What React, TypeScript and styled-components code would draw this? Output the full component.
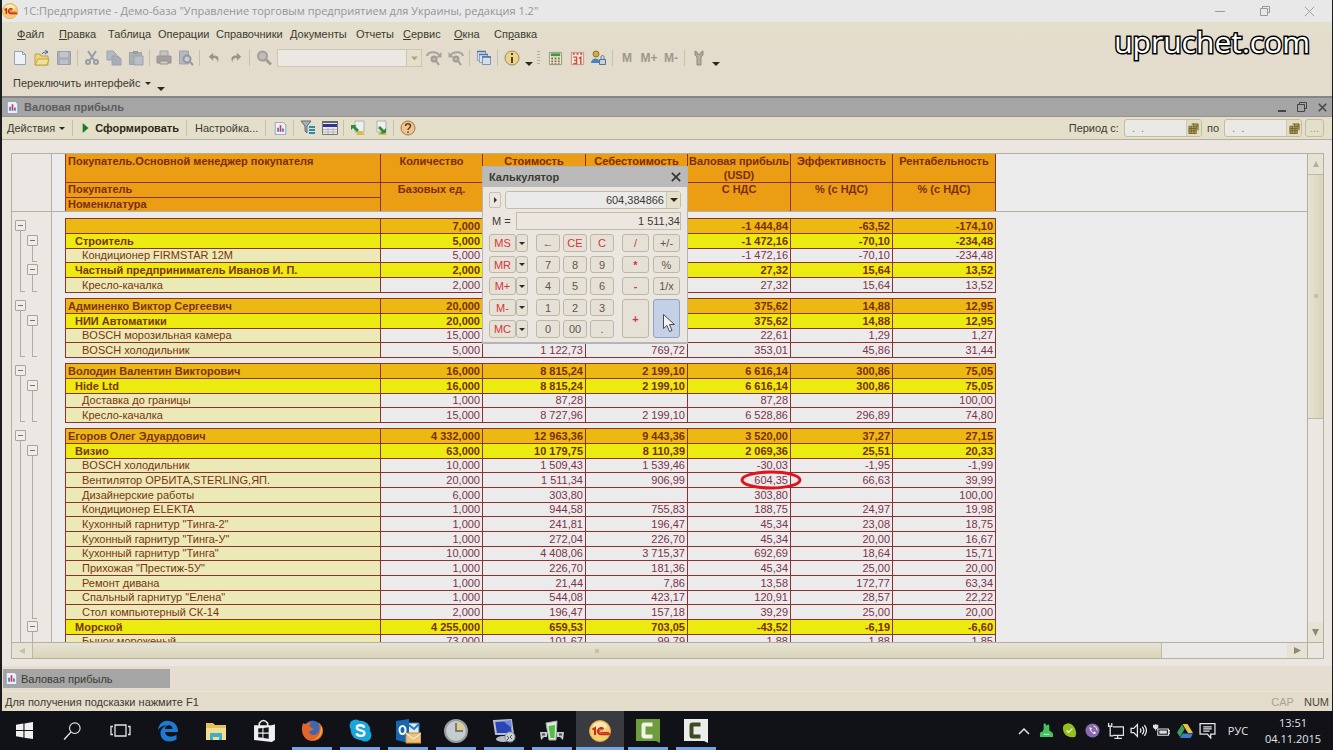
import React from 'react';
import styled, { createGlobalStyle, css } from 'styled-components';

const UI = '"Liberation Sans", Arial, sans-serif';
const SEGOE = '"Open Sans", "Noto Sans", sans-serif';
const LINE = '#8f3030';
const FRAME = '#b4b0a2';

const GlobalStyle = createGlobalStyle`
  * { box-sizing: border-box; }
  body { margin: 0; background: #1c1c1c; font-family: ${UI}; font-size: 11px; color: #3d3a30; }
  button, input { font: inherit; color: inherit; margin: 0; padding: 0; border: 0; background: none; }
  svg { display: block; flex: none; }
`;

const Desktop = styled.div`
  height: 100vh;
  display: flex;
  flex-direction: column;
  overflow: hidden;
  position: relative;
`;
const Window = styled.div`
  flex: 1;
  min-height: 0;
  margin: 0 1px 0 2px;
  display: flex;
  flex-direction: column;
  background: #e3dccc;
`;
const TitleBar = styled.header`
  height: 22px;
  display: flex;
  align-items: center;
  background: #e8e8e9;
  padding: 0 15px 0 0;
  font: 11px/20px ${SEGOE};
  color: #959595;
`;
const TitleText = styled.h1`
  margin: 0 auto 0 5px;
  font: inherit;
  white-space: nowrap;
`;
const WindowButtons = styled.div`
  display: flex;
  gap: 30px;
  button { display: grid; place-items: center; width: 15px; height: 20px; color: #999; }
`;
const Watermark = styled.div`
  position: absolute;
  top: 24px;
  right: 23px;
  font: 30px/36px ${SEGOE};
  color: #fff;
  -webkit-text-stroke: 3px #000;
  paint-order: stroke fill;
`;
const MenuBar = styled.nav`
  height: 24px;
  display: flex;
  align-items: center;
  padding-left: 15px;
  background: linear-gradient(#e2e0cc, #e4dccb);
`;
const MenuItem = styled.button<{ $w: number }>`
  width: ${p => p.$w}px;
  text-align: left;
  white-space: nowrap;
`;
const Toolbar = styled.div<{ $h: number; $pad: number }>`
  height: ${p => p.$h}px;
  padding-left: ${p => p.$pad}px;
  display: flex;
  align-items: center;
  flex: none;
`;
const Tool = styled.button<{ $narrow?: boolean }>`
  && {
    width: ${p => (p.$narrow ? 11 : 22)}px;
    height: 20px;
    display: grid;
    place-items: center;
    color: #9d988e;
    font-size: 12px;
    font-weight: bold;
  }
`;
const Separator = styled.span`
  width: 1px;
  height: 16px;
  margin: 0 3px 0 2px;
  background: #c5bfae;
  flex: none;
`;
const Grip = styled.span`
  width: 3px;
  height: 14px;
  margin: 0 4px 0 3px;
  background: repeating-linear-gradient(#b4ae9f 0 1px, transparent 1px 3px);
`;
const Search = styled.div`
  width: 145px;
  height: 18px;
  margin: 0 1px 0 2px;
  display: flex;
  border: 1px solid #cbc5b2;
  background: #ebe8e4;
  input { flex: 1; min-width: 0; }
  button { width: 15px; border-left: 1px solid #cbc5b2; background: #e4dfc9; display: grid; place-items: center; }
`;
const TextButton = styled.button<{ $bold?: boolean }>`
  display: flex;
  align-items: center;
  gap: 4px;
  height: 20px;
  padding: 0 5px;
  white-space: nowrap;
  && { font-weight: ${p => (p.$bold ? 'bold' : 'normal')}; }
  color: ${p => (p.$bold ? '#2d2818' : '#3d3a30')};
`;
const Caret = styled.i<{ $big?: boolean }>`
  border: ${p => (p.$big ? 4 : 3)}px solid transparent;
  border-top-color: #2b2820;
  border-bottom: 0;
`;
const Overflow = styled(Caret)`
  margin-top: 12px;
`;
const DocTitle = styled.div`
  height: 21px;
  display: flex;
  align-items: center;
  padding: 0 3px 0 4px;
  background: #a5a5a5;
  border-top: 2px solid #858585;
  border-bottom: 1px solid #96948c;
  color: #5c5c5c;
  h2 { margin: 0 auto 0 5px; font-size: 11px; line-height: 16px; }
`;
const DocButtons = styled.div`
  display: flex;
  gap: 6px;
  button { width: 14px; height: 16px; display: grid; place-items: center; color: #444; }
`;
const DocBar = styled.div`
  height: 23px;
  flex: none;
  display: flex;
  align-items: center;
  background: #e3dfcb;
  border-bottom: 1px solid #b5ae9a;
`;
const Period = styled.div`
  margin-left: auto;
  display: flex;
  align-items: center;
  padding-right: 8px;
  white-space: nowrap;
`;
const DateField = styled.div`
  width: 78px;
  height: 18px;
  display: flex;
  border: 1px solid #c3bca4;
  border-radius: 3px;
  background: #ebe9e6;
  overflow: hidden;
  input { flex: 1; min-width: 0; padding-left: 7px; color: #777; white-space: pre; }
  button { width: 15px; background: #e2dcc3; border-left: 1px solid #cfc9b4; display: grid; place-items: center; }
`;
const MoreButton = styled.button`
  && {
    width: 19px;
    height: 18px;
    margin-left: 3px;
    border: 1px solid #c3bca4;
    border-radius: 3px;
    color: #a09a88;
  }
`;
const Content = styled.main`
  flex: 1;
  min-height: 0;
  display: flex;
  padding: 13px 8px 7px 9px;
  background: #ebe6e0;
`;
const Viewer = styled.section`
  flex: 1;
  min-width: 0;
  display: grid;
  grid-template-columns: minmax(0, 1fr) 16px;
  grid-template-rows: minmax(0, 1fr) 16px;
  border: 1px solid ${FRAME};
`;
const SheetArea = styled.div`
  overflow: hidden;
  background: #ebebec;
`;
const Sheet = styled.table`
  width: 100%;
  table-layout: fixed;
  border-collapse: separate;
  border-spacing: 0;
  font-size: 11px;
  line-height: 13px;
  td, th { padding: 0; white-space: nowrap; }
`;
const HeadCell = styled.th<{ $left?: boolean; $first?: boolean }>`
  && {
    background: #eb9d14;
    color: #7c2c0c;
    vertical-align: top;
    white-space: normal;
    line-height: ${p => (p.$first ? 14 : 13)}px;
    text-align: ${p => (p.$left ? 'left' : 'center')};
    padding-left: ${p => (p.$left ? 2 : 0)}px;
    border-right: 1px solid ${LINE};
    border-left: ${p => (p.$left ? `1px solid ${LINE}` : 0)};
    border-top: ${p => (p.$first ? 0 : `1px solid ${LINE}`)};
  }
`;
const Gutter = styled.td<{ $edge?: boolean; $top?: boolean }>`
  background-color: #ebe7e2;
  border-right: ${p => (p.$edge ? `1px solid ${FRAME}` : 0)};
  border-top: ${p => (p.$top ? `1px solid ${FRAME}` : 0)};
`;
const Rule = styled.td`
  border-top: 1px solid ${FRAME};
`;
const HeadRow = styled.tr<{ $h: number }>`
  height: ${p => p.$h}px;
`;
const Group = styled.tbody`
  tr { height: 15px; }
  tr:nth-child(3n) { height: 14px; }
  tr:last-child { height: 6px; line-height: 5px; }
`;
type Mark = 'toggle' | 'line' | 'end' | 'none';
const TreeCell = styled(Gutter)<{ $mark: Mark; $x: number }>`
  vertical-align: top;
  background-repeat: no-repeat;
  ${p => {
    const c = 'linear-gradient(#b0aca4, #b0aca4)';
    if (p.$mark === 'toggle')
      return css`background-image: ${c}; background-size: 1px 100%; background-position: ${p.$x}px 12px;`;
    if (p.$mark === 'line')
      return css`background-image: ${c}; background-size: 1px 100%; background-position: ${p.$x}px 0;`;
    if (p.$mark === 'end')
      return css`background-image: ${c}, ${c}; background-size: 1px 100%, 5px 1px; background-position: ${p.$x}px 0, ${p.$x}px 100%;`;
    return '';
  }}
`;
const Toggle = styled.button<{ $x: number }>`
  && {
    display: block;
    width: 11px;
    height: 11px;
    margin: 2px 0 0 ${p => p.$x - 5}px;
    border: 1px solid #a9a59c;
    border-radius: 1px;
    background: linear-gradient(#77736b, #77736b) center / 5px 1px no-repeat #efede8;
  }
`;
type Kind = 'manager' | 'client' | 'item';
const fill = { manager: '#ebb911', client: '#ebeb0f', item: 'transparent' };
const indent = { manager: 2, client: 9, item: 16 };
const NameCell = styled.th<{ $kind: Kind }>`
  && {
    padding-left: ${p => indent[p.$kind]}px;
    text-align: left;
    font-weight: ${p => (p.$kind === 'item' ? 'normal' : 'bold')};
    background: ${p => (p.$kind === 'item' ? '#ebeab6' : fill[p.$kind])};
    color: #7d3312;
    border: 1px solid ${LINE};
    border-bottom: 0;
  }
`;
const NumCell = styled.td<{ $kind: Kind }>`
  && {
    position: relative;
    padding-right: 2px;
    text-align: right;
    font-weight: ${p => (p.$kind === 'item' ? 'normal' : 'bold')};
    background: ${p => fill[p.$kind]};
    color: ${p => (p.$kind === 'item' ? '#7c3348' : '#7c2c0c')};
    border-right: 1px solid ${LINE};
    border-top: 1px solid ${LINE};
  }
`;
const GroupEnd = styled.td`
  border-top: 1px solid ${LINE};
`;
const Highlight = styled.svg`
  position: absolute;
  z-index: 1;
  right: -12px;
  top: -3px;
`;
const ScrollV = styled.div`
  display: flex;
  flex-direction: column;
  border-left: 1px solid ${FRAME};
  background: #ebe7e2;
`;
const ScrollH = styled.div`
  display: flex;
  border-top: 1px solid ${FRAME};
  background: #ebe9e8;
`;
const ScrollArrow = styled.button`
  flex: 0 0 20px;
  && {
    display: grid;
    place-items: center;
    background: #e6e2d4;
  }
`;
const Thumb = styled.div<{ $grow: number; $vertical?: boolean }>`
  flex: ${p => p.$grow} 0 0;
  display: grid;
  place-items: center;
  background: linear-gradient(${p => (p.$vertical ? '90deg' : '180deg')}, #e6e3d5, #dad4b8);
  border: solid #beb9a4;
  border-width: ${p => (p.$vertical ? '1px 0' : '0 1px')};
  &::after { content: ''; width: 4px; height: 4px; background: #c4bfaa; border-radius: 1px; }
`;
const Track = styled.div<{ $grow: number }>`
  flex: ${p => p.$grow} 0 0;
`;
const Corner = styled.div`
  border: solid ${FRAME};
  border-width: 1px 0 0 1px;
`;
const TabStrip = styled.div`
  height: 25px;
  padding: 3px 0 3px 1px;
  background: #e4ddd0;
`;
const Tab = styled.button`
  && {
    display: flex;
    align-items: center;
    gap: 3px;
    width: 167px;
    height: 19px;
    padding-left: 2px;
    background: #a5a5a5;
  }
`;
const StatusBar = styled.footer`
  height: 20px;
  display: flex;
  align-items: center;
  padding: 0 3px;
  background: #e3dccb;
  border-top: 1px solid #e9e3d2;
  p { margin: 0 auto 0 0; }
`;
const Lock = styled.span<{ $off?: boolean }>`
  color: ${p => (p.$off ? '#aaa392' : '#4b473b')};
  margin-left: 10px;
`;

/* calculator */
const Calc = styled.section`
  position: absolute;
  left: 482px;
  top: 166px;
  width: 206px;
  height: 178px;
  z-index: 2;
  padding: 2px 6px 0 6px;
  border: 1px solid #b5b5b5;
  border-bottom: 2px solid #b5b5b5;
  background: #ebe7e0;
`;
const CalcTitle = styled.div`
  display: flex;
  align-items: center;
  justify-content: space-between;
  height: 20px;
  margin: -2px -6px 4px;
  padding: 0 6px;
  background: #bababb;
  h3 { margin: 0; font-size: 11px; }
  button { color: #333; }
`;
const CalcLine = styled.div`
  display: flex;
  align-items: center;
  height: 18px;
  margin-bottom: 3px;
  label { width: 27px; padding-left: 3px; flex: none; white-space: nowrap; }
  input { flex: 1; min-width: 0; text-align: right; }
`;
const StepButton = styled.button`
  && {
    width: 12px;
    height: 16px;
    margin-right: 4px;
    border: 1px solid #c6c0ad;
    border-radius: 2px;
    display: grid;
    place-items: center;
  }
`;
const Display = styled.div`
  flex: 1;
  height: 18px;
  display: flex;
  border: 1px solid #c3bda8;
  border-radius: 3px;
  background: #ebeaea;
  button { width: 14px; margin-left: 2px; border-left: 1px solid #cfc9b4; display: grid; place-items: center; background: #e6e0c8; }
`;
const Memory = styled.input`
  && { height: 18px; border: 1px solid #c3bda8; }
`;
const Keys = styled.div`
  display: grid;
  grid-template-columns: 27px 12px 8px 24px 3px 24px 3px 24px 8px 27px 4px 27px;
  grid-template-rows: 18px 17px 18px 17px 18px;
  row-gap: 4px;
  margin-top: 4px;
`;
const Key = styled.button<{ $col: number; $row: number; $span?: number; $red?: boolean; $bold?: boolean; $active?: boolean }>`
  && {
    grid-column: ${p => p.$col};
    grid-row: ${p => p.$row} / span ${p => p.$span ?? 1};
    display: grid;
    place-items: center;
    position: relative;
    border: 1px solid ${p => (p.$active ? '#8ea3c6' : '#bdb7a4')};
    border-radius: 3px;
    background: ${p => (p.$active ? '#c3d0e6' : '#e6e1d6')};
    color: ${p => (p.$red ? '#d8343a' : '#5c584c')};
    font-weight: ${p => (p.$bold ? 'bold' : 'normal')};
  }
`;
const Pointer = styled.svg`
  position: absolute;
  left: 8px;
  top: 13px;
`;

/* taskbar */
const Taskbar = styled.nav`
  height: 39px;
  flex: none;
  display: flex;
  align-items: center;
  background: #101218;
  color: #e4e4e4;
`;
const TaskButton = styled.button<{ $open?: boolean; $active?: boolean }>`
  && {
    width: 48px;
    height: 39px;
    display: grid;
    place-items: center;
    position: relative;
    background: ${p => (p.$active ? '#3a3b40' : 'none')};
    &::after {
      content: '';
      position: absolute;
      bottom: 0;
      left: ${p => (p.$active ? 0 : 4)}px;
      right: ${p => (p.$active ? 0 : 4)}px;
      height: 3px;
      background: ${p => (p.$open ? '#76a5e3' : 'transparent')};
    }
  }
`;
const Tray = styled.div`
  margin-left: auto;
  display: flex;
  align-items: center;
  font: 11px/16px ${SEGOE};
`;
const TrayButton = styled.button`
  width: 23px;
  height: 39px;
  display: grid;
  place-items: center;
`;
const Language = styled.button`
  width: 38px;
  text-align: center;
`;
const Clock = styled.time`
  width: 72px;
  margin-right: 4px;
  text-align: center;
`;

type P = { children: React.ReactNode; s?: number; box?: string };
const Ico = ({ children, s = 16, box = '0 0 16 16' }: P) => (
  <svg width={s} height={s} viewBox={box} fill="none" stroke="currentColor" aria-hidden="true">{children}</svg>
);
const OneC = ({ s = 16 }: { s?: number }) => (
  <Ico s={s} box="0 0 22 22">
    <circle cx="11" cy="11" r="10.5" fill="#f3cf70" stroke="#e2a94a" />
    <ellipse cx="11" cy="6" rx="7" ry="4" fill="#fae9b4" stroke="none" />
    <path d="M3.5 9.5 6 8v7M14.5 9a3.2 3.2 0 1 0-2 5.3H21" stroke="#cc2a1c" strokeWidth="2" />
    <path d="M13.5 10.500a1.500 1.500 0 1 0-1 2H20" stroke="#cc2a1c" strokeWidth="1" />
  </Ico>
);
const Report = () => (
  <Ico s={13}>
    <path d="M1.500.5h10l3 3v12h-13z" fill="#eceff5" stroke="#8596ad" />
    <path d="M5 12V7" stroke="#3a70c0" strokeWidth="2" /><path d="M8 12V4" stroke="#d33" strokeWidth="2" /><path d="M11 12V8" stroke="#3a70c0" strokeWidth="2" />
  </Ico>
);
const Restore = () => (
  <Ico s={12} box="0 0 12 12"><path d="M3.500 3V1.500h7v6H9M1.500 3.500h7v7h-7z" /></Ico>
);
const Cross = ({ s = 11, w = 1 }: { s?: number; w?: number }) => (
  <Ico s={s} box="0 0 12 12"><path d="m1 1 10 10M11 1 1 11" strokeWidth={w} /></Ico>
);
const GridIcon = () => (
  <Ico s={11} box="0 0 12 12">
    <path d="M4 1h7v7M1 3.500h8v8H1z" fill="#b6a75c" stroke="#6d612c" /><path d="M1 6h8M1 8.500h8M3.500 3.500v8M6.500 3.500v8M6 1v2M9 3h2" stroke="#6d612c" />
  </Ico>
);
const Lens = () => <><circle cx="6.500" cy="6" r="4.500" fill="#c0bdb8" stroke="#a19d98" strokeWidth="2" /><path d="m10 9.500 5 5" stroke="#a19d98" strokeWidth="3" /></>;

const edit: Record<string, React.ReactNode> = {
  Создать: <Ico><path d="M2.500 1.500h8l3 3v10h-11z" fill="#edf0f5" stroke="#8fa3bb" /><path d="M10.500 1.500v3h3" stroke="#8fa3bb" /></Ico>,
  Открыть: <Ico><path d="M1 4h5l1 2h7v9H1z" fill="#ead57c" stroke="#bfa245" /><path d="m1 15 3-6h11l-2 6z" fill="#f0df95" stroke="#bfa245" /><path d="M8 4c1-2 3-2 5-2m-2-2 3 2-3 2" stroke="#3c67a8" /></Ico>,
  Сохранить: <Ico><path d="M1.500 1.500h13v13h-13z" fill="#a9afb8" stroke="#98a0ad" /><path d="M4 2h8v5H4z" fill="#c3c7cc" stroke="none" /><path d="M4 10h8v4H4z" fill="#bcc0c8" stroke="none" /></Ico>,
  Вырезать: <Ico><path d="m4 1 6 9M12 1 6 10" stroke="#979da6" strokeWidth="2" /><circle cx="4" cy="12" r="2" stroke="#979da6" strokeWidth="2" /><circle cx="12" cy="12" r="2" stroke="#979da6" strokeWidth="2" /></Ico>,
  Копировать: <Ico><path d="M1 1h6l3 3v6H1z" fill="#b4bac2" stroke="#9aa2ae" /><path d="M6 6h6l3 3v6H6z" fill="#a7adb6" stroke="#9aa2ae" /></Ico>,
  Вставить: <Ico><path d="M1.500 2.500h12v12h-12z" fill="#aeb0b0" stroke="#a0a3a7" /><path d="M5 1h5v3H5z" fill="#989ca3" stroke="none" /><path d="M6 6h9v9H6z" fill="#b9bec5" stroke="#9aa2ae" /></Ico>,
  Печать: <Ico><path d="M4 6V1h8v5" fill="#c4c3c2" stroke="#a4a09d" /><path d="M1 6h14v7H1z" fill="#a5a09e" stroke="#979390" /><path d="M4 11h8v3H4z" fill="#cfccca" stroke="#979390" /></Ico>,
  Просмотр: <Ico><path d="M1.500 1h9v13h-9z" fill="#b5bac1" stroke="#9da4ad" /><circle cx="9" cy="9" r="3.500" fill="#c8cbd0" stroke="#9097a1" strokeWidth="2" /><path d="m12 12 3 3" stroke="#9097a1" strokeWidth="2" /></Ico>,
  Отменить: <Ico s={14}><path d="M7 2 2 6.500 7 11V8c4 0 5 2 5 5 3-6 0-8-5-8z" fill="#99958d" stroke="none" /></Ico>,
  Вернуть: <Ico s={14}><path d="m9 2 5 4.500L9 11V8c-4 0-5 2-5 5-3-6 0-8 5-8z" fill="#99958d" stroke="none" /></Ico>,
  Найти: <Ico><Lens /></Ico>,
};
const FindNext = ({ flip }: { flip?: boolean }) => (
  <Ico><g transform={flip ? 'matrix(-1 0 0 1 16 0)' : undefined}><path d="M1 6c1-5 10-5 13 0" stroke="#a7a39a" strokeWidth="2" /><path d="M15.500 2v5.500H10z" fill="#a7a39a" stroke="none" /></g><circle cx="8" cy="9" r="2.500" fill="#bdb9b0" stroke="#a09c93" strokeWidth="2" /><path d="m10 11 3 4" stroke="#a09c93" strokeWidth="2" /></Ico>
);
const Windows_ = () => <Ico><path d="M1.500 1.500h8v9h-8z" fill="#dbe2ec" stroke="#8da2c2" /><path d="M3.500 4.500h8v8h-8z" fill="#dbe2ec" stroke="#8da2c2" /><path d="M6.500 6.500h8v8h-8z" fill="#d5deea" stroke="#7b93b8" /><path d="M1 1.500h9M3 4.500h9M6 7h9" stroke="#4d72ad" strokeWidth="1.500" /></Ico>;
const Info = () => <Ico><circle cx="8" cy="8" r="7" fill="#ebd48a" stroke="#9c8b5b" /><path d="M8 7v6M8 3v2" stroke="#4e4526" strokeWidth="2" /></Ico>;
const CalcIcon = () => <Ico s={15}><path d="M1.500 1.500h13v13h-13z" fill="#ebe6cf" stroke="#9a9270" /><path d="M3 4h10" stroke="#3a9a48" strokeWidth="3" /><path d="M4.500 7v7M8 7v7M11.500 7v7" stroke="#7c744f" strokeWidth="2" strokeDasharray="2 1" /></Ico>;
const Calendar = () => <Ico s={15}><path d="M1.500 1.500h13v13h-13z" fill="#f1e5dc" stroke="#c79080" /><path d="M3 3h10" stroke="#d24a32" strokeWidth="2" strokeDasharray="2 2" /><path d="M3.500 6.500H7v3.500H4.500 7v3.500H3.500M9.500 8l2-1.500V14" stroke="#d24a32" strokeWidth="1.500" /></Ico>;
const Users = () => <Ico><circle cx="5" cy="4" r="3" fill="#d2ac3c" stroke="#8d742c" /><path d="M0 13c0-6 9-6 9 0z" fill="#4c83bd" stroke="none" /><path d="M8.500 9.500h6v5h-6z" fill="#c9d1de" stroke="#54719c" /><path d="M10 9V7c0-2 3-2 3 0v2" stroke="#54719c" /></Ico>;
const Wrench = () => <Ico><path d="M4 1v4l2 2v8h4V7l2-2V1l-2 1v2H6V2z" fill="#b1ada2" stroke="#8f8a7e" /></Ico>;
const Filter = () => <Ico><path d="M1 1h10L7 6v7L5 11V6z" fill="#a9b0ba" stroke="#667" /><path d="M9 7h6M9 10h6M9 13h6" stroke="#2d8bb0" strokeWidth="2" /></Ico>;
const TableIcon = () => <Ico><path d="M.5 1.500h15v13H.5z" fill="#e9e9e9" stroke="#77777c" /><path d="M0 2h16" stroke="#66666c" strokeWidth="2" /><path d="M1 5.500h14" stroke="#2c3596" strokeWidth="3" /><path d="M1 9.500h14M1 12h14M6 8v6M11 8v6" stroke="#b5b5b5" /></Ico>;
const SheetArrow = ({ out }: { out?: boolean }) => <Ico><path d="M5 1h9v11H5z" fill="#eef0ee" stroke="#a9b3b8" /><path d="M6 15h9l-3-4H8z" fill="#dbbd4d" stroke="none" />{out ? <path d="M14 13V8l-2 2-4-4-2 2 4 4-2 2z" fill="#2f8b3a" stroke="none" /> : <path d="M1 5v5l2-2 4 4 2-2-4-4 2-1z" fill="#2f8b3a" stroke="none" />}</Ico>;
const Help = () => <Ico><circle cx="8" cy="8" r="7" fill="#ecc592" stroke="#a67442" /><path d="M5.500 6c0-3 5-3 5 0 0 2-2.500 2-2.500 4M8 11.500v1.500" stroke="#6b3a1c" strokeWidth="1.500" /></Ico>;

const menu: [string, number, number][] = [
  ['Файл', 42, 0], ['Правка', 49, 0], ['Таблица', 50, -1], ['Операции', 58, -1], ['Справочники', 74, -1],
  ['Документы', 66, -1], ['Отчеты', 47, -1], ['Сервис', 51, 0], ['Окна', 40, 0], ['Справка', 50, 2],
];

const raw: string[][] = [
  [
    'm||7,000|||-1 444,84|-63,52|-174,10', 'c|Строитель|5,000|||-1 472,16|-70,10|-234,48',
    'i|Кондиционер FIRMSTAR 12М|5,000|||-1 472,16|-70,10|-234,48', 'c|Частный предприниматель Иванов И. П.|2,000|||27,32|15,64|13,52',
    'i|Кресло-качалка|2,000|||27,32|15,64|13,52',
  ],
  [
    'm|Админенко Виктор Сергеевич|20,000|||375,62|14,88|12,95', 'c|НИИ Автоматики|20,000|||375,62|14,88|12,95',
    'i|BOSCH морозильная камера|15,000|||22,61|1,29|1,27', 'i|BOSCH холодильник|5,000|1 122,73|769,72|353,01|45,86|31,44',
  ],
  [
    'm|Володин Валентин Викторович|16,000|8 815,24|2 199,10|6 616,14|300,86|75,05', 'c|Hide Ltd|16,000|8 815,24|2 199,10|6 616,14|300,86|75,05',
    'i|Доставка до границы|1,000|87,28||87,28||100,00', 'i|Кресло-качалка|15,000|8 727,96|2 199,10|6 528,86|296,89|74,80',
  ],
  [
    'm|Егоров Олег Эдуардович|4 332,000|12 963,36|9 443,36|3 520,00|37,27|27,15', 'c|Визио|63,000|10 179,75|8 110,39|2 069,36|25,51|20,33',
    'i|BOSCH холодильник|10,000|1 509,43|1 539,46|-30,03|-1,95|-1,99', 'i|Вентилятор ОРБИТА,STERLING,ЯП.|20,000|1 511,34|906,99|604,35|66,63|39,99',
    'i|Дизайнерские работы|6,000|303,80||303,80||100,00', 'i|Кондиционер ELEKTA|1,000|944,58|755,83|188,75|24,97|19,98',
    'i|Кухонный гарнитур "Тинга-2"|1,000|241,81|196,47|45,34|23,08|18,75', 'i|Кухонный гарнитур "Тинга-У"|1,000|272,04|226,70|45,34|20,00|16,67',
    'i|Кухонный гарнитур "Тинга"|10,000|4 408,06|3 715,37|692,69|18,64|15,71', 'i|Прихожая "Престиж-5У"|1,000|226,70|181,36|45,34|25,00|20,00',
    'i|Ремонт дивана|1,000|21,44|7,86|13,58|172,77|63,34', 'i|Спальный гарнитур "Елена"|1,000|544,08|423,17|120,91|28,57|22,22',
    'i|Стол компьютерный СК-14|2,000|196,47|157,18|39,29|25,00|20,00', 'c|Морской|4 255,000|659,53|703,05|-43,52|-6,19|-6,60',
    'i|Бычок мороженый|73,000|101,67|99,79|1,88|1,88|1,85',
  ],
];
const kinds: Record<string, Kind> = { m: 'manager', c: 'client', i: 'item' };
const groups = raw.map(g => g.map(r => { const [k, name, ...nums] = r.split('|'); return { kind: kinds[k], name, nums }; }));
const columns = [14, 26, 13, 316, 102, 103, 102, 103, 102, 103];

function SheetTable() {
  return (
    <Sheet>
      <colgroup>{columns.map((w, i) => <col key={i} style={{ width: w }} />)}<col /></colgroup>
      <thead>
        <HeadRow $h={28}>
          <Gutter rowSpan={3} /><Gutter rowSpan={3} $edge /><td rowSpan={3} />
          <HeadCell $left $first>Покупатель.Основной менеджер покупателя</HeadCell>
          {['Количество', 'Стоимость', 'Себестоимость', 'Валовая прибыль (USD)', 'Эффективность', 'Рентабельность'].map(t => <HeadCell key={t} $first>{t}</HeadCell>)}
          <td rowSpan={3} />
        </HeadRow>
        <HeadRow $h={15}>
          <HeadCell $left>Покупатель</HeadCell>
          {['Базовых ед.', '', '', 'С НДС', '% (с НДС)', '% (с НДС)'].map((t, i) => <HeadCell key={i} rowSpan={2}>{t}</HeadCell>)}
        </HeadRow>
        <HeadRow $h={14}><HeadCell $left>Номенклатура</HeadCell></HeadRow>
        <HeadRow $h={7}><Gutter $top /><Gutter $top $edge /><Rule colSpan={9} /></HeadRow>
      </thead>
      {groups.map((g, gi) => (
        <Group key={gi}>
          {g.map((r, i) => {
            const last = i === g.length - 1;
            const l1: Mark = i === 0 ? 'toggle' : last ? 'end' : 'line';
            const l2: Mark = r.kind === 'manager' ? 'none' : r.kind === 'client' ? 'toggle' : last || g[i + 1].kind !== 'item' ? 'end' : 'line';
            return (
              <tr key={i}>
                <TreeCell $mark={l1} $x={8}>{l1 === 'toggle' && <Toggle $x={8} aria-label="Свернуть" />}</TreeCell>
                <TreeCell $mark={l2} $x={6} $edge>{l2 === 'toggle' && <Toggle $x={6} aria-label="Свернуть" />}</TreeCell>
                <td />
                <NameCell $kind={r.kind} scope="row">{r.name}</NameCell>
                {r.nums.map((n, j) => (
                  <NumCell key={j} $kind={r.kind}>
                    {n}
                    {n === '604,35' && <Highlight width="62" height="20" fill="none"><ellipse cx="31" cy="10" rx="29" ry="8" stroke="#e0141c" strokeWidth="3" /></Highlight>}
                  </NumCell>
                ))}
                <td />
              </tr>
            );
          })}
          <tr><Gutter /><Gutter $edge /><td /><GroupEnd colSpan={7} /><td /></tr>
        </Group>
      ))}
    </Sheet>
  );
}

function Calculator() {
  const mem = ['MS', 'MR', 'M+', 'M-', 'MC'];
  const digits = [['←', 'CE', 'C'], ['7', '8', '9'], ['4', '5', '6'], ['1', '2', '3'], ['0', '00', '.']];
  return (
    <Calc>
      <CalcTitle><h3>Калькулятор</h3><button aria-label="Закрыть"><Cross s={10} w={2} /></button></CalcTitle>
      <CalcLine>
        <StepButton aria-label="Развернуть"><Ico s={6} box="0 0 6 6"><path d="m2 0 3 3-3 3z" fill="#333" stroke="none" /></Ico></StepButton>
        <Display><input aria-label="Результат" defaultValue="604,384866" /><button aria-label="История"><Caret $big /></button></Display>
      </CalcLine>
      <CalcLine><label htmlFor="mem">M =</label><Memory id="mem" defaultValue="1 511,34" /></CalcLine>
      <Keys>
        {mem.map((m, i) => (
          <React.Fragment key={m}>
            <Key $col={1} $row={i + 1} $red>{m}</Key>
            <Key $col={2} $row={i + 1} aria-label={`${m} список`}><Caret /></Key>
          </React.Fragment>
        ))}
        {digits.map((row, i) => row.map((d, j) => <Key key={d} $col={4 + j * 2} $row={i + 1} $red={i === 0 && j > 0}>{d}</Key>))}
        <Key $col={10} $row={1} $red>/</Key>
        <Key $col={10} $row={2} $red $bold>*</Key>
        <Key $col={10} $row={3} $red $bold>-</Key>
        <Key $col={10} $row={4} $span={2} $red $bold>+</Key>
        <Key $col={12} $row={1}>+/-</Key><Key $col={12} $row={2}>%</Key><Key $col={12} $row={3}>1/x</Key>
        <Key $col={12} $row={4} $span={2} $active aria-label="Равно">
          <Pointer width="14" height="20" viewBox="0 0 14 20"><path d="M1.500 1.500v14l3.500-3 2.500 6 2.500-1-2.500-6h5z" fill="#f4f4f4" stroke="#4a4a55" /></Pointer>
        </Key>
      </Keys>
    </Calc>
  );
}

const Camtasia = ({ dark }: { dark?: boolean }) => (
  <Ico s={24} box="0 0 24 24"><path d="M0 0h24v24l-4-2H0z" fill={dark ? '#ecece8' : '#6f9c3c'} stroke="none" /><path d="M16.500 5.500H8.500q-1 0-1 1v10q0 1 1 1h8" stroke={dark ? '#3f4a22' : '#f0f4e8'} strokeWidth="4" /></Ico>
);
const apps: [string, React.ReactNode, boolean?, boolean?][] = [
  ['Пуск', <Ico s={17}><path d="m0 2.500 7-1v6H0zM8 1.300 16 0v7.500H8zM0 8.500h7v6l-7-1zM8 8.500h8V16l-8-1.200z" fill="#f0f0f0" stroke="none" /></Ico>],
  ['Поиск', <Ico s={18}><circle cx="10.500" cy="5.500" r="4.700" /><path d="M7 9 1 15.500" strokeWidth="1.300" /></Ico>],
  ['Представление задач', <Ico s={21} box="0 0 21 16"><path d="M5 2.500h11v11H5zM3 4H1v8h2M18 4h2v8h-2" strokeWidth="1.300" /></Ico>],
  ['Edge', <Ico s={22} box="0 0 22 22"><path d="M1 10C2 3 7 0 12 1c6 1 9 5 9 11H8c1 6 8 5 11.500 3v4.500C11 24 3 20 3.500 12.500 4 8.500 7 6.500 10 5.500 5.500 5.500 2.500 7.500 1 10zm7-1h7.500c0-5-7-5-7.500 0z" fill="#1c7bd3" stroke="none" /></Ico>],
  ['Проводник', <Ico s={22} box="0 0 22 22"><path d="M1 3h7l2 2h11v15H1z" fill="#e3c05c" stroke="none" /><path d="M1 8h20v12H1z" fill="#f2dd92" stroke="none" /><path d="M5 20v-7h12v7h-3v-3H8v3z" fill="#3fb0cc" stroke="none" /></Ico>],
  ['Магазин', <Ico s={23} box="0 0 22 22"><path d="M1 6h17l3-1v15l-3 2-17-2z" fill="#f0f0f0" stroke="none" /><path d="M6 7V4q4-5 8 0v3" stroke="#eee" strokeWidth="1.500" /><path d="m5 9 4-.4V13H5zM10 8.500l5-.5v5h-5zM5 14h4v4l-4-.5zM10 14h5v5l-5-.8z" fill="#14161c" stroke="none" /></Ico>],
  ['Firefox', <Ico s={23} box="0 0 22 22"><circle cx="11" cy="10" r="8.500" fill="#3b68ae" stroke="none" /><path d="M2 4c-3 7 0 17 9 17 9 0 12-9 9-14-1-2-2-3-4-4 3 4 2 10-2 12-4 1-7-1-6-3l4-2c-1-2-4-2-4-4l2-3C7 3 5 5 5 5z" fill="#e4642b" stroke="none" /><path d="M20 8c1 7-3 12-9 12 6-2 8-5 8-13z" fill="#f2b53a" stroke="none" /></Ico>, true],
  ['Skype', <Ico s={23} box="0 0 22 22"><circle cx="6.500" cy="6.500" r="6" fill="#19a6dc" stroke="none" /><circle cx="15.500" cy="15.500" r="6" fill="#19a6dc" stroke="none" /><circle cx="11" cy="11" r="9.300" fill="#19a6dc" stroke="none" /><path d="M14.700 8.200C13.500 5 7.500 5.400 7.500 8.300c0 3.200 7.300 1.900 7.300 5.200 0 3.500-6.600 3.400-7.700.3" stroke="#fff" strokeWidth="2.300" /></Ico>, true],
  ['Outlook', <Ico s={26} box="0 0 26 26"><path d="M13 5h11v14H13z" fill="#dfeaf6" stroke="#2779bd" /><path d="m14 7 5 4 5-5" stroke="#2779bd" strokeWidth="2" /><path d="m1 3 13-2v24L1 22z" fill="#1667ae" stroke="none" /><ellipse cx="7.500" cy="12" rx="3" ry="4" stroke="#fff" strokeWidth="2" /><path d="M11 15h15v10H11z" fill="#efc07a" stroke="#c48c42" /><path d="m11 15 7.500 6L26 15" stroke="#fff" /></Ico>, true],
  ['Часы', <Ico s={24} box="0 0 24 24"><circle cx="12" cy="12" r="11" fill="#c6cccd" stroke="#969da0" strokeWidth="2" /><path d="M12 12V3a9 9 0 0 1 9 9z" fill="#dfcb8c" stroke="none" /><path d="M12 4v8h7" stroke="#59636a" strokeWidth="1.500" /></Ico>, true],
  ['Удаленный рабочий стол', <Ico s={24} box="0 0 24 24"><path d="m2 2 17-1 2 14H4z" fill="#2946b8" stroke="#b8c0cf" strokeWidth="2" /><path d="m11 2 8-1 1 8z" fill="#6d8ae0" stroke="none" /><ellipse cx="11" cy="20" rx="7" ry="3" fill="#b7bdc6" stroke="none" /><circle cx="18" cy="18" r="5" fill="#ccd1d0" stroke="#8c9496" /><path d="m15 17 2 2-2 2m5-5-2 2 2 2" stroke="#556" /></Ico>, true],
  ['Мониторинг', <Ico s={24} box="0 0 24 24"><path d="m6 4 11-2-1 19H9z" fill="#dfe7df" stroke="#a5aeaa" /><path d="m8.500 7 6.500-1-.5 13h-4z" fill="#4fbf3c" stroke="none" /><path d="M0 13h7v5H4l-3 3zM24 13h-7v5h3l3 3z" fill="#c5cbcd" stroke="none" /><path d="M2 14.500h3v2H2zM19 14.500h3v2h-3z" fill="#4c5254" stroke="none" /></Ico>, true],
  ['1С:Предприятие', <OneC s={22} />, true, true],
  ['Camtasia', <Camtasia />, true],
  ['Camtasia Recorder', <Camtasia dark />, true],
];
const tray: [string, React.ReactNode][] = [
  ['Скрытые значки', <Ico s={12} box="0 0 12 12"><path d="m1 9 5-5 5 5" strokeWidth="1.500" /></Ico>],
  ['Punto', <Ico s={15}><path d="M5 6V1q2-2 3 2 3-3 3 1v4q4 2 4 4v3H1v-3q0-3 3-3z" fill="#45c160" stroke="none" /><path d="M5 12h6" stroke="#d9f2dd" /></Ico>],
  ['Агент', <Ico s={15}><path d="M2 2q6-4 10 1 5 6 2 12-9 1-12-5Q0 5 2 2z" fill="#93c01f" stroke="none" /><path d="m5 8 2 2 4-4" stroke="#eaf5ce" strokeWidth="1.500" /></Ico>],
  ['Viber', <Ico s={15}><circle cx="8" cy="8" r="7.500" fill="#8869ab" stroke="none" /><path d="M5 4q-1 3 2.500 6 3 3 4.500.500L10 9 8.500 10Q7 9 6.500 7L7.500 6z" fill="#f2eef7" stroke="none" /><path d="M9 3q4 1 4 5" stroke="#f2eef7" /></Ico>],
  ['Сеть', <Ico s={17}><path d="M5.500 4.500h10v8h-10M10 13v2M7 15.500h7M1.500 1v3h3V1M3 4v9h3" strokeWidth="1.200" /></Ico>],
  ['Громкость', <Ico s={17}><path d="M1 6h2.500L7 2.500v11L3.500 10H1zM9.500 6q1.500 2 0 4M11.500 4.500q3 3.500 0 7M13.500 3q4 5 0 10" strokeWidth="1.200" /></Ico>],
  ['Батарея', <Ico s={17}><path d="M4.500 6.500h10v6h-10zM15 8h1v3h-1" /><path d="M6 8h7v3H6z" fill="#ddd" stroke="none" /><path d="M2.500 2v6m-2-5h4v2q-2 3-4 0z" fill="#ddd" /></Ico>],
  ['Google Drive', <Ico s={16}><path d="M5.500 1h5L16 10h-5z" fill="#ecc13d" stroke="none" /><path d="M5 1.500 7.700 6 3 14l-3-4.500z" fill="#3f9d5c" stroke="none" /><path d="M5.500 10.500H16L13.500 15H3z" fill="#3f78d0" stroke="none" /></Ico>],
  ['Уведомления', <Ico s={17}><path d="M1 1.500h14v10h-4v3.500L8 11.500H1zM4 4.500h8M4 6.500h8M4 8.500h6" strokeWidth="1.200" /></Ico>],
];

export default function App() {
  return (
    <>
      <GlobalStyle />
      <Desktop>
        <Window>
          <TitleBar>
            <OneC />
            <TitleText>1С:Предприятие - Демо-база "Управление торговым предприятием для Украины, редакция 1.2"</TitleText>
            <WindowButtons>
              <button aria-label="Свернуть"><Ico s={10} box="0 0 10 10"><path d="M0 5.500h10" /></Ico></button>
              <button aria-label="Восстановить"><Restore /></button>
              <button aria-label="Закрыть"><Cross /></button>
            </WindowButtons>
          </TitleBar>
          <MenuBar>
            {menu.map(([t, w, u]) => (
              <MenuItem key={t} $w={w}>{u < 0 ? t : <>{t.slice(0, u)}<u>{t[u]}</u>{t.slice(u + 1)}</>}</MenuItem>
            ))}
          </MenuBar>
          <Toolbar $h={24} $pad={7}>
            {Object.entries(edit).map(([k, v], i) => (
              <React.Fragment key={k}>{[3, 6, 8, 10].includes(i) && <Separator />}<Tool aria-label={k}>{v}</Tool></React.Fragment>
            ))}
            <Search><input aria-label="Строка поиска" /><button aria-label="Список"><Ico s={7} box="0 0 7 4"><path d="M0 0h7L3.500 4z" fill="#aaa391" stroke="none" /></Ico></button></Search>
            <Tool aria-label="Найти далее"><FindNext /></Tool>
            <Tool aria-label="Найти ранее"><FindNext flip /></Tool>
            <Separator />
            <Tool aria-label="Окна"><Windows_ /></Tool>
            <Separator />
            <Tool aria-label="Справка"><Info /></Tool>
            <Tool $narrow aria-label="Еще"><Overflow $big /></Tool>
            <Grip />
            <Tool aria-label="Калькулятор"><CalcIcon /></Tool>
            <Tool aria-label="Календарь"><Calendar /></Tool>
            <Tool aria-label="Пользователи"><Users /></Tool>
            <Separator />
            <Tool>M</Tool><Tool>M+</Tool><Tool>M-</Tool>
            <Separator />
            <Tool aria-label="Настройка"><Wrench /></Tool>
            <Tool $narrow aria-label="Еще"><Overflow $big /></Tool>
          </Toolbar>
          <Toolbar $h={26} $pad={6}>
            <TextButton>Переключить интерфейс <Caret /></TextButton>
            <Tool $narrow aria-label="Еще"><Overflow $big /></Tool>
          </Toolbar>
          <DocTitle>
            <Report /><h2>Валовая прибыль</h2>
            <DocButtons>
              <button aria-label="Свернуть"><Ico s={10} box="0 0 10 10"><path d="M1 9h8" strokeWidth="2" /></Ico></button>
              <button aria-label="Восстановить"><Restore /></button>
              <button aria-label="Закрыть"><Cross s={9} w={2} /></button>
            </DocButtons>
          </DocTitle>
          <DocBar>
            <TextButton>Действия <Caret /></TextButton>
            <Separator />
            <TextButton $bold><Ico s={10} box="2 0 10 12"><path d="m3 0 7 6-7 6z" fill="#1d7a22" stroke="none" /></Ico>Сформировать</TextButton>
            <Separator />
            <TextButton>Настройка...</TextButton>
            <Separator />
            <Tool aria-label="Отчет"><Report /></Tool>
            <Separator />
            <Tool aria-label="Отбор"><Filter /></Tool><Tool aria-label="Таблица"><TableIcon /></Tool>
            <Separator />
            <Tool aria-label="Загрузить"><SheetArrow /></Tool><Tool aria-label="Выгрузить"><SheetArrow out /></Tool>
            <Separator />
            <Tool aria-label="Помощь"><Help /></Tool>
            <Period>
              <TextButton as="label" htmlFor="from">Период с:</TextButton>
              <DateField><input id="from" defaultValue=".  ." /><button aria-label="Выбрать начало"><GridIcon /></button></DateField>
              <TextButton as="label" htmlFor="to">по</TextButton>
              <DateField><input id="to" defaultValue=".  ." /><button aria-label="Выбрать конец"><GridIcon /></button></DateField>
              <MoreButton>...</MoreButton>
            </Period>
          </DocBar>
          <Content>
            <Viewer>
              <SheetArea><SheetTable /></SheetArea>
              <ScrollV>
                <ScrollArrow aria-label="Вверх"><Ico s={6} box="0 0 6 6"><path d="m3 0 3 6H0z" fill="#b4ae9b" stroke="none" /></Ico></ScrollArrow>
                <Thumb $grow={244} $vertical /><Track $grow={204} />
                <ScrollArrow aria-label="Вниз"><Ico s={7} box="0 0 6 6"><path d="m3 6 3-6H0z" fill="#8c8778" stroke="none" /></Ico></ScrollArrow>
              </ScrollV>
              <ScrollH>
                <ScrollArrow aria-label="Влево"><Ico s={6} box="0 0 6 6"><path d="m0 3 6-3v6z" fill="#c4bfb2" stroke="none" /></Ico></ScrollArrow>
                <Thumb $grow={1132} /><Track $grow={125} />
                <ScrollArrow aria-label="Вправо"><Ico s={7} box="0 0 6 6"><path d="M6 3 0 0v6z" fill="#8c8778" stroke="none" /></Ico></ScrollArrow>
              </ScrollH>
              <Corner />
            </Viewer>
          </Content>
          <TabStrip><Tab><Report />Валовая прибыль</Tab></TabStrip>
          <StatusBar><p>Для получения подсказки нажмите F1</p><Lock $off>CAP</Lock><Lock>NUM</Lock></StatusBar>
        </Window>
        <Taskbar>
          {apps.map(([n, icon, open, active]) => <TaskButton key={n} aria-label={n} $open={open} $active={active}>{icon}</TaskButton>)}
          <Tray>
            {tray.map(([n, icon]) => <TrayButton key={n} aria-label={n}>{icon}</TrayButton>)}
            <Language>РУС</Language>
            <Clock>13:51<br />04.11.2015</Clock>
          </Tray>
        </Taskbar>
        <Watermark>upruchet.com</Watermark>
        <Calculator />
      </Desktop>
    </>
  );
}
